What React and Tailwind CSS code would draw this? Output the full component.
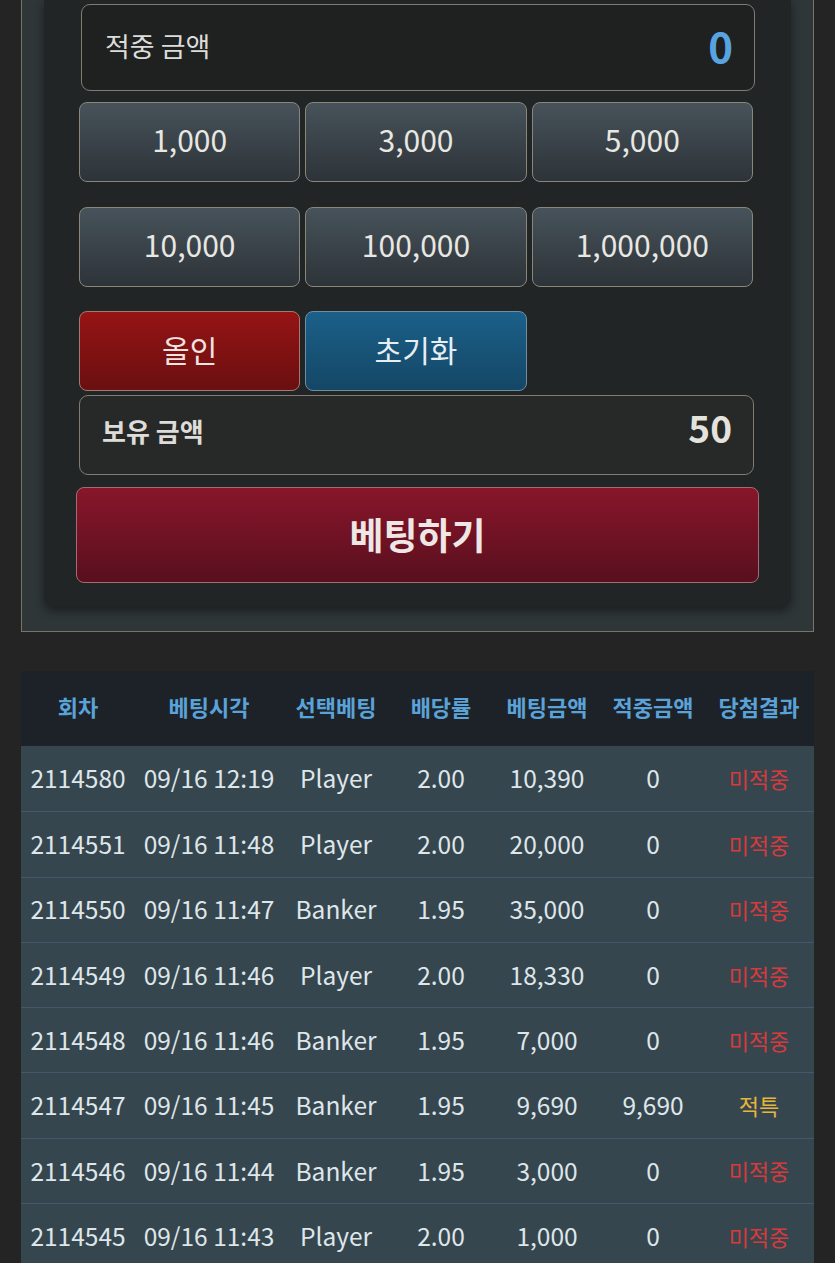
import React from "react";

const FONT = { fontFamily: '"Noto Sans CJK KR", "Noto Sans", sans-serif' };

const rows = [
  ["2114580", "09/16 12:19", "Player", "2.00", "10,390", "0", "미적중"],
  ["2114551", "09/16 11:48", "Player", "2.00", "20,000", "0", "미적중"],
  ["2114550", "09/16 11:47", "Banker", "1.95", "35,000", "0", "미적중"],
  ["2114549", "09/16 11:46", "Player", "2.00", "18,330", "0", "미적중"],
  ["2114548", "09/16 11:46", "Banker", "1.95", "7,000", "0", "미적중"],
  ["2114547", "09/16 11:45", "Banker", "1.95", "9,690", "9,690", "적특"],
  ["2114546", "09/16 11:44", "Banker", "1.95", "3,000", "0", "미적중"],
  ["2114545", "09/16 11:43", "Player", "2.00", "1,000", "0", "미적중"],
];

const headers = ["회차", "베팅시각", "선택베팅", "배당률", "베팅금액", "적중금액", "당첨결과"];

function AmountButton({ children }) {
  return (
    <button className="h-[80px] pb-[6px] rounded-[8px] border border-[#8a867a] bg-gradient-to-b from-[#47525a] to-[#2d3439] text-[30px] text-[#e8e7e2] flex items-center justify-center">
      {children}
    </button>
  );
}

export default function App() {
  return (
    <div className="min-h-[1263px] bg-[#232423] pb-4" style={FONT}>
      {/* Outer panel */}
      <div className="mx-[21px] border-x border-b border-[#77746c] bg-[#2f3638] px-[22px] pb-[24px]">
        <div className="rounded-b-[10px] bg-[#212525] px-[32px] pt-[4px] pb-[24px] shadow-[0_4px_10px_rgba(0,0,0,0.45)]">
          {/* 적중 금액 */}
          <div className="ml-[5px] mr-[4px] h-[87px] rounded-[9px] border border-[#807c72] bg-[#1f2120] flex items-center justify-between pl-[23px] pr-[21px]">
            <span className="mb-[2px] text-[27px] text-[#dcdcda]">적중 금액</span>
            <span className="mb-[6px] text-[42px] font-bold text-[#58a4e0]">0</span>
          </div>

          {/* amount buttons */}
          <div className="ml-[3px] mr-[6px] mt-[11px] grid grid-cols-3 gap-x-[5px] gap-y-[25px]">
            <AmountButton>1,000</AmountButton>
            <AmountButton>3,000</AmountButton>
            <AmountButton>5,000</AmountButton>
            <AmountButton>10,000</AmountButton>
            <AmountButton>100,000</AmountButton>
            <AmountButton>1,000,000</AmountButton>
          </div>

          <div className="ml-[3px] mr-[6px] mt-[24px] grid grid-cols-3 gap-x-[5px]">
            <button className="h-[80px] pb-[4px] rounded-[8px] border border-[#a27a72] bg-gradient-to-b from-[#961414] to-[#6b0f10] text-[30px] text-[#f0e4e2] flex items-center justify-center">
              올인
            </button>
            <button className="h-[80px] pb-[3px] rounded-[8px] border border-[#6f8ea2] bg-gradient-to-b from-[#1b6089] to-[#144766] text-[30px] text-[#e6eef2] flex items-center justify-center">
              초기화
            </button>
          </div>

          {/* 보유 금액 */}
          <div className="ml-[3px] mr-[5px] mt-[4px] h-[80px] pb-[10px] rounded-[9px] border border-[#807c72] bg-[#272928] flex items-center justify-between pl-[22px] pr-[21px]">
            <span className="text-[26px] font-bold text-[#dedcd8]">보유 금액</span>
            <span className="mb-[4px] text-[37px] font-bold text-[#e4e2dc]">50</span>
          </div>

          {/* 베팅하기 */}
          <button className="mt-[12px] w-full h-[96px] rounded-[8px] border border-[#a56a72] bg-gradient-to-b from-[#88162a] to-[#590f1e] text-[37px] font-bold text-[#efe6e6] flex items-center justify-center">
            베팅하기
          </button>
        </div>
      </div>

      {/* Table */}
      <div className="mx-[21px] mt-[39px]">
        <div className="grid grid-cols-[114px_148px_106px_104px_108px_104px_108px] h-[75px] pb-[5px] items-center bg-[#1c2228] text-[22px] font-bold text-[#5ba2d8]">
          {headers.map((h) => (
            <div key={h} className="text-center whitespace-nowrap">{h}</div>
          ))}
        </div>
        {rows.map((r, i) => (
          <div
            key={r[0]}
            className={`grid grid-cols-[114px_148px_106px_104px_108px_104px_108px] h-[65.3px] items-center bg-[#36464f] text-[24.5px] text-[#dfe6ea] ${i > 0 ? "border-t border-[#43596a]" : ""}`}
          >
            {r.slice(0, 6).map((c, j) => (
              <div key={j} className="text-center whitespace-nowrap">{c}</div>
            ))}
            <div className={`text-center text-[22px] ${r[6] === "적특" ? "text-[#e7b43c]" : "text-[#d83a3c]"}`}>{r[6]}</div>
          </div>
        ))}
      </div>
    </div>
  );
}
